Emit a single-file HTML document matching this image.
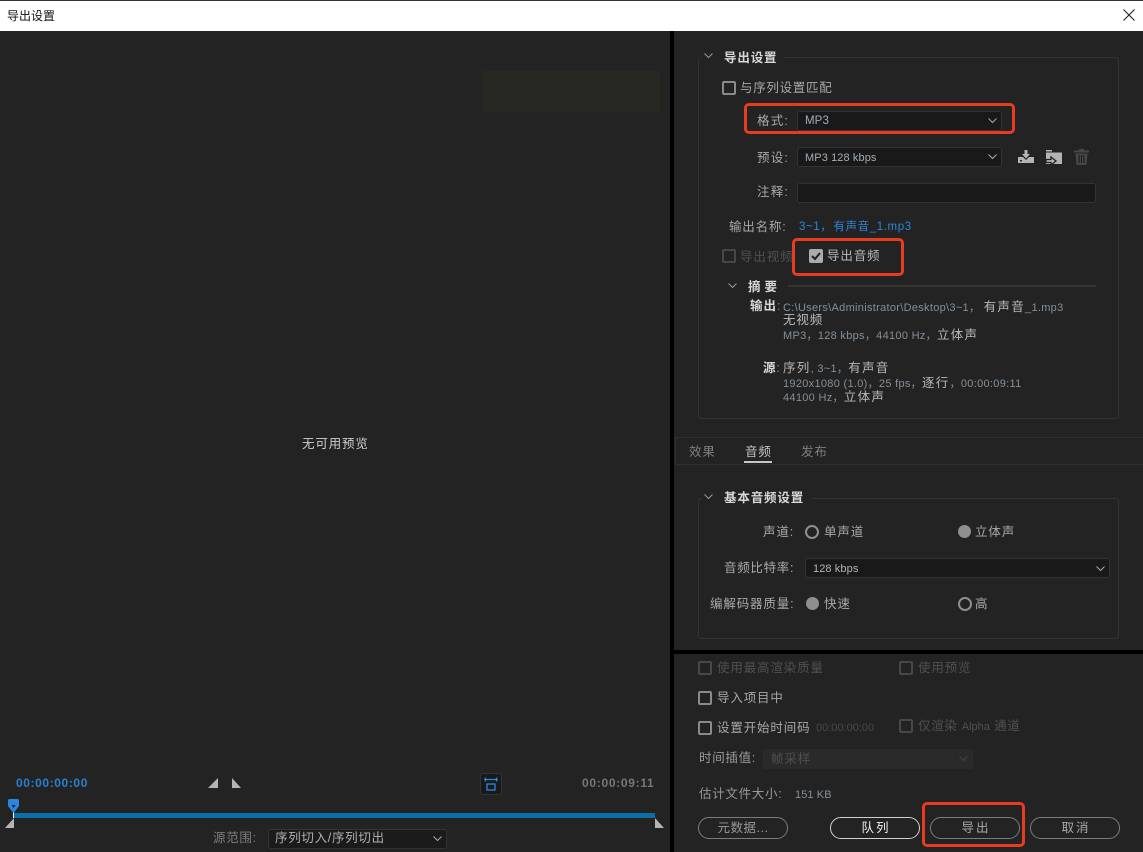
<!DOCTYPE html>
<html lang="zh"><head><meta charset="utf-8"><title>导出设置</title>
<style>
html,body{margin:0;padding:0;background:#232323}
#p{position:relative;width:1143px;height:852px;overflow:hidden;background:#232323;font-family:"Liberation Sans","Noto Sans CJK SC",sans-serif;font-size:12.5px;color:#a8a8a8}
#p div,#p span.t{position:absolute;box-sizing:border-box}
.t{white-space:nowrap;line-height:16px;letter-spacing:.85px;margin-top:1px}
.b{font-weight:700;color:#d8d8d8}
.l{font-size:11px;letter-spacing:.1px;color:#84909a}
.l2{letter-spacing:.3px}
.l i{font-style:normal;font-size:12.5px;letter-spacing:1.3px;color:#b8b8b8}
.s{background:#191919;border:1px solid #333;border-radius:3px}
.cb{width:14px;height:14px;border:2px solid #8a8a8a;border-radius:2px}
.cd{border-color:#484848}
.dis{color:#505050}
.grp{border:1px solid #333;border-radius:3px}
.rad{width:14px;height:14px;border:2px solid #8f8f8f;border-radius:50%}
.fil{width:13px;height:13px;background:#8f8f8f;border-radius:50%}
.btn{height:22px;width:90px;border:1px solid #7c7c7c;border-radius:11px;text-align:center;line-height:20px;letter-spacing:2px;padding-left:2px;color:#a8a8a8}
.red{border:3px solid #e83c20;border-radius:5px}
svg{position:absolute;display:block}
</style></head><body><div id="p">

<div style="left:0;top:0;width:1143px;height:31px;background:#fff;border-top:1px solid #333"></div>
<span class="t" style="left:7px;top:7px;color:#111;font-size:12px;letter-spacing:0">导出设置</span>
<svg style="left:1123px;top:9px" width="12" height="12"><path d="M.5 .5L11.5 11.5M11.5 .5L.5 11.5" stroke="#222" stroke-width="1.1" fill="none"/></svg>

<div style="left:670px;top:31px;width:4px;height:821px;background:#000"></div>
<div style="left:674px;top:650px;width:469px;height:4px;background:#000"></div>

<div style="left:483px;top:71px;width:177px;height:41px;background:#282823"></div>
<span class="t" style="left:302px;top:435px;color:#cfcfcf">无可用预览</span>

<span class="t" style="left:16px;top:775px;margin-top:0;color:#2c7fd0;font-size:12px;letter-spacing:.6px;font-weight:700">00:00:00:00</span>
<span class="t" style="left:582px;top:775px;margin-top:0;color:#7b7771;font-size:12px;letter-spacing:.7px;font-weight:700">00:00:09:11</span>
<svg style="left:208px;top:778px" width="34" height="11"><path d="M10 0V10H0ZM24 0V10H33Z" fill="#b4b4b4"/></svg>
<div style="left:480px;top:773px;width:22px;height:22px;background:#191919;border:1px solid #333;border-radius:3px"></div>
<svg style="left:484px;top:777px" width="14" height="14"><path d="M0 2.5H14M1.5 .5V4.5M12.5 .5V4.5" stroke="#2b86e0" stroke-width="1.3" fill="none"/><rect x="3" y="7" width="8" height="6" stroke="#2b86e0" stroke-width="1.3" fill="none"/></svg>
<div style="left:13px;top:813px;width:642px;height:5px;background:#0a6ea8"></div>
<div style="left:13px;top:810px;width:1px;height:8px;background:#fff"></div>
<svg style="left:8px;top:799px" width="11" height="14"><path d="M0 1.5Q0 0 1.5 0H9.5Q11 0 11 1.5V7L6 13.5H5L0 7Z" fill="#2b86e0"/><path d="M3.5 6H7.5L5.5 9Z" fill="#123"/></svg>
<svg style="left:5px;top:818px" width="9" height="10"><path d="M9 0V10H0Z" fill="#b4b4b4"/></svg>
<svg style="left:655px;top:818px" width="9" height="10"><path d="M0 0V10H9Z" fill="#b4b4b4"/></svg>
<span class="t" style="left:213px;top:829px;color:#7d7d7d;letter-spacing:.7px">源范围:</span>
<div class="s" style="left:268px;top:829px;width:179px;height:20px;background:#1b1b1b"></div>
<span class="t" style="left:275px;top:829px;color:#b0b0b0;letter-spacing:.7px">序列切入/序列切出</span>
<svg style="left:433px;top:836px" width="9" height="6"><path d="M.5 .5L4.5 4.5L8.5 .5" stroke="#aaa" fill="none"/></svg>

<div class="grp" style="left:698px;top:57px;width:421px;height:362px"></div>
<div style="left:702px;top:50px;width:82px;height:14px;background:#232323"></div>
<svg style="left:704px;top:53px" width="9" height="6"><path d="M.5 .5L4.5 4.5L8.5 .5" stroke="#999" fill="none"/></svg>
<span class="t b" style="left:724px;top:49px">导出设置</span>

<div class="cb" style="left:722px;top:81px"></div>
<span class="t" style="left:740px;top:79px;letter-spacing:.7px">与序列设置匹配</span>

<span class="t" style="left:757px;top:112px;letter-spacing:1.2px">格式:</span>
<div class="s" style="left:797px;top:111px;width:205px;height:20px"></div>
<span class="t l" style="left:805px;top:112px;color:#a3aeb6;font-size:11.5px">MP3</span>
<svg style="left:988px;top:118px" width="9" height="6"><path d="M.5 .5L4.5 4.5L8.5 .5" stroke="#aaa" fill="none"/></svg>

<span class="t" style="left:757px;top:149px;letter-spacing:1.2px">预设:</span>
<div class="s" style="left:797px;top:147px;width:205px;height:20px"></div>
<span class="t l" style="left:805px;top:149px;color:#a3aeb6">MP3 128 kbps</span>
<svg style="left:988px;top:154px" width="9" height="6"><path d="M.5 .5L4.5 4.5L8.5 .5" stroke="#aaa" fill="none"/></svg>

<svg style="left:1018px;top:149px" width="16" height="15"><path d="M0 8H5L8 11L11 8H16V14H0Z" fill="#b4b4b4"/><path d="M6.5 1H9.5V5H12L8 9.5L4 5H6.5Z" fill="#b4b4b4"/><rect x="2" y="11" width="2" height="1.5" fill="#232323"/></svg>
<svg style="left:1046px;top:149px" width="16" height="16"><path d="M0 1H6V2.5H0ZM0 3.5H16V15H0Z" fill="#b4b4b4"/><path d="M0 10.5H5V8L10 12L5 16V13.5H0Z" fill="#b4b4b4" stroke="#232323" stroke-width="1.3"/></svg>
<svg style="left:1074px;top:149px" width="15" height="16"><path d="M5 0H10V1.5H15V3.5H0V1.5H5ZM1.5 4.5H13.5L12.5 16H2.5ZM4.5 6V14H5.8V6ZM6.9 6V14H8.1V6ZM9.2 6V14H10.5V6Z" fill="#474747" fill-rule="evenodd"/></svg>

<span class="t" style="left:757px;top:183px;letter-spacing:1.2px">注释:</span>
<div class="s" style="left:797px;top:183px;width:299px;height:20px"></div>

<span class="t" style="left:729px;top:218px;letter-spacing:.8px">输出名称:</span>
<span class="t" style="left:799px;top:218px;color:#2a86d8;font-size:11.5px;letter-spacing:.6px">3~1，<span style="margin-left:1px">有声音</span>_1.mp3</span>

<div class="cb cd" style="left:722px;top:249px"></div>
<span class="t dis" style="left:740px;top:248px">导出视频</span>
<div style="left:809px;top:249px;width:14px;height:14px;background:#ababab;border-radius:2px"></div>
<svg style="left:811px;top:251px" width="10" height="10"><path d="M1 5L4 8L9 2" stroke="#222" stroke-width="2" fill="none"/></svg>
<span class="t" style="left:827px;top:247px;color:#b8b8b8">导出音频</span>

<svg style="left:728px;top:283px" width="9" height="6"><path d="M.5 .5L4.5 4.5L8.5 .5" stroke="#999" fill="none"/></svg>
<span class="t b" style="left:748px;top:278px;letter-spacing:4px">摘要</span>
<div style="left:788px;top:285px;width:308px;height:2px;background:#343434"></div>

<span class="t b" style="left:750px;top:297px;letter-spacing:1px">输出<span style="font-weight:400;color:#888">:</span></span>
<span class="t l l2" style="left:783px;top:298px">C:\Users\Administrator\Desktop\3~1， <i>有声音</i>_1.mp3</span>
<span class="t" style="left:783px;top:311px;color:#bbb">无视频</span>
<span class="t l l2" style="left:783px;top:326px">MP3，128 kbps，44100 Hz，<i>立体声</i></span>
<span class="t b" style="left:763px;top:359px">源<span style="font-weight:400;color:#888">:</span></span>
<span class="t l l2" style="left:783px;top:359px"><i>序列</i>, 3~1，<i>有声音</i></span>
<span class="t l l2" style="left:783px;top:374px">1920x1080 (1.0)，25 fps，<i>逐行</i>，00:00:09:11</span>
<span class="t l l2" style="left:783px;top:388px">44100 Hz，<i>立体声</i></span>

<div style="left:675px;top:437px;width:468px;height:28px;border-top:1px solid #303030;border-bottom:1px solid #303030;border-left:1px solid #303030"></div>
<span class="t" style="left:689px;top:443px;color:#7f7f7f">效果</span>
<span class="t" style="left:745px;top:443px;color:#c4c4c4">音频</span>
<div style="left:744px;top:461px;width:28px;height:2px;background:#c8c8c8"></div>
<span class="t" style="left:801px;top:443px;color:#7f7f7f">发布</span>

<div class="grp" style="left:698px;top:498px;width:421px;height:141px"></div>
<div style="left:702px;top:491px;width:109px;height:14px;background:#232323"></div>
<svg style="left:704px;top:494px" width="9" height="6"><path d="M.5 .5L4.5 4.5L8.5 .5" stroke="#999" fill="none"/></svg>
<span class="t b" style="left:724px;top:489px">基本音频设置</span>

<span class="t" style="left:763px;top:523px">声道:</span>
<div class="rad" style="left:805px;top:525px"></div>
<span class="t" style="left:824px;top:523px">单声道</span>
<div class="fil" style="left:958px;top:525px"></div>
<span class="t" style="left:975px;top:523px">立体声</span>

<span class="t" style="left:724px;top:559px;letter-spacing:.7px">音频比特率:</span>
<div class="s" style="left:805px;top:558px;width:305px;height:20px"></div>
<span class="t l" style="left:813px;top:560px;color:#b4b4b4">128 kbps</span>
<svg style="left:1096px;top:566px" width="9" height="6"><path d="M.5 .5L4.5 4.5L8.5 .5" stroke="#aaa" fill="none"/></svg>

<span class="t" style="left:710px;top:595px">编解码器质量:</span>
<div class="fil" style="left:806px;top:597px"></div>
<span class="t" style="left:824px;top:595px">快速</span>
<div class="rad" style="left:958px;top:597px"></div>
<span class="t" style="left:975px;top:595px">高</span>

<div class="cb cd" style="left:698px;top:661px"></div>
<span class="t dis" style="left:717px;top:659px">使用最高渲染质量</span>
<div class="cb cd" style="left:899px;top:661px"></div>
<span class="t dis" style="left:918px;top:659px">使用预览</span>
<div class="cb" style="left:698px;top:691px"></div>
<span class="t" style="left:717px;top:689px">导入项目中</span>
<div class="cb" style="left:698px;top:721px"></div>
<span class="t" style="left:717px;top:719px">设置开始时间码</span>
<span class="t" style="left:816px;top:719px;color:#4c4844;font-size:11px;letter-spacing:0">00:00:00:00</span>
<div class="cb cd" style="left:899px;top:719px"></div>
<span class="t dis" style="left:918px;top:717px;letter-spacing:.7px">仅渲染 <span style="font-size:11px;letter-spacing:0">Alpha</span> 通道</span>

<span class="t" style="left:699px;top:749px;color:#999;letter-spacing:.7px">时间插值:</span>
<div style="left:763px;top:749px;width:210px;height:20px;background:#2a2a2a;border-radius:2px"></div>
<span class="t dis" style="left:771px;top:750px">帧采样</span>
<svg style="left:959px;top:756px" width="9" height="6"><path d="M.5 .5L4.5 4.5L8.5 .5" stroke="#444" fill="none"/></svg>

<span class="t" style="left:699px;top:785px;color:#999;letter-spacing:.7px">估计文件大小:</span>
<span class="t l" style="left:795px;top:786px">151 KB</span>

<div class="btn" style="left:698px;top:817px;color:#999;letter-spacing:.5px;padding-left:0">元数据...</div>
<div class="btn" style="left:830px;top:817px;border-color:#d0d0d0;color:#f0f0f0">队列</div>
<div class="btn" style="left:930px;top:817px">导出</div>
<div class="btn" style="left:1030px;top:817px">取消</div>

<div class="red" style="left:744px;top:103px;width:271px;height:31px"></div>
<div class="red" style="left:792px;top:238px;width:112px;height:38px"></div>
<div class="red" style="left:922px;top:802px;width:103px;height:45px"></div>
</div></body></html>
